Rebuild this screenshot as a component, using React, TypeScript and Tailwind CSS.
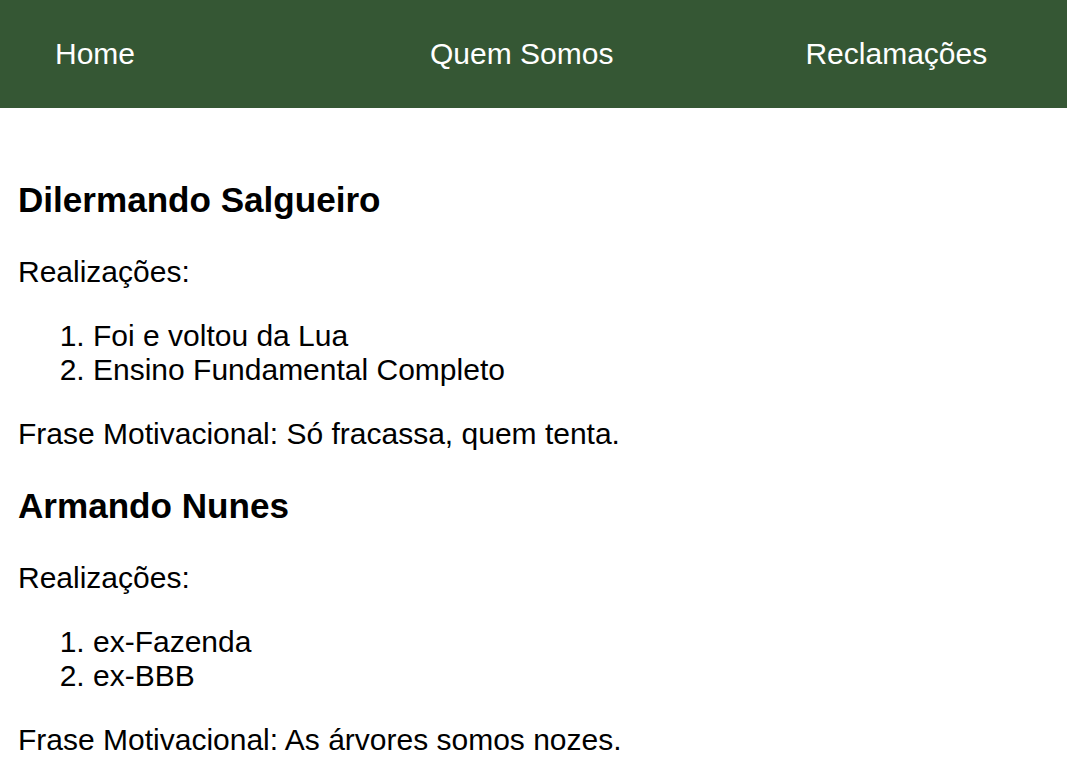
const pessoas = [
  {
    nome: 'Dilermando Salgueiro',
    realizacoes: ['Foi e voltou da Lua', 'Ensino Fundamental Completo'],
    frase: 'Só fracassa, quem tenta.',
  },
  {
    nome: 'Armando Nunes',
    realizacoes: ['ex-Fazenda', 'ex-BBB'],
    frase: 'As árvores somos nozes.',
  },
];

function Navbar() {
  return (
    <nav className="flex h-[108px] items-center bg-[#355734] pl-[55px] text-[30px] leading-[normal] text-white">
      <a href="#">Home</a>
      <a href="#" className="ml-[295px]">Quem Somos</a>
      <a href="#" className="ml-[192px]">Reclamações</a>
    </nav>
  );
}

export default function App() {
  return (
    <div className="min-h-screen bg-white font-['Liberation_Sans',Arial,sans-serif] text-black">
      <Navbar />
      <main className="px-[18px] pt-[37px] text-[30px] leading-[normal]">
        {pessoas.map((p) => (
          <section key={p.nome}>
            <h3 className="my-[35.1px] text-[35.1px] font-bold leading-[normal]">{p.nome}</h3>
            <p className="my-[30px]">Realizações:</p>
            <ol className="my-[30px] list-decimal pl-[75px]">
              {p.realizacoes.map((r) => (
                <li key={r}>{r}</li>
              ))}
            </ol>
            <p className="my-[30px]">Frase Motivacional: {p.frase}</p>
          </section>
        ))}
      </main>
    </div>
  );
}
